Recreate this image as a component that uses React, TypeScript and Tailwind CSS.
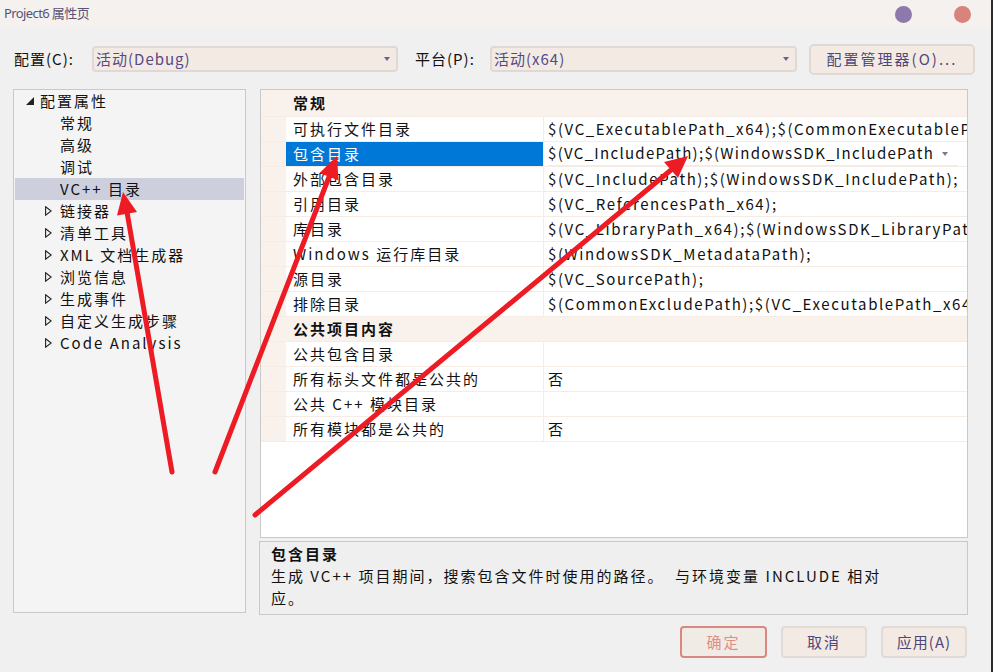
import React from 'react';

const FONT = "font-['Noto_Sans_CJK_SC','Noto_Sans',sans-serif]";

const TREE = [
  { label: '常规', kind: 'leaf' },
  { label: '高级', kind: 'leaf' },
  { label: '调试', kind: 'leaf' },
  { label: 'VC++ 目录', kind: 'leaf', active: true },
  { label: '链接器', kind: 'node' },
  { label: '清单工具', kind: 'node' },
  { label: 'XML 文档生成器', kind: 'node' },
  { label: '浏览信息', kind: 'node' },
  { label: '生成事件', kind: 'node' },
  { label: '自定义生成步骤', kind: 'node' },
  { label: 'Code Analysis', kind: 'node' },
];

const GENERAL = [
  ['可执行文件目录', '$(VC_ExecutablePath_x64);$(CommonExecutablePath)'],
  ['包含目录', '$(VC_IncludePath);$(WindowsSDK_IncludePath'],
  ['外部包含目录', '$(VC_IncludePath);$(WindowsSDK_IncludePath);'],
  ['引用目录', '$(VC_ReferencesPath_x64);'],
  ['库目录', '$(VC_LibraryPath_x64);$(WindowsSDK_LibraryPath_x64)'],
  ['Windows 运行库目录', '$(WindowsSDK_MetadataPath);'],
  ['源目录', '$(VC_SourcePath);'],
  ['排除目录', '$(CommonExcludePath);$(VC_ExecutablePath_x64)'],
];

const PUBLIC = [
  ['公共包含目录', ''],
  ['所有标头文件都是公共的', '否'],
  ['公共 C++ 模块目录', ''],
  ['所有模块都是公共的', '否'],
];

function Dropdown({ value, width }: { value: string; width: string }) {
  return (
    <div
      className={`${width} h-[26px] rounded-[4px] border-2 border-[#e0d8d4] bg-[#f3ebe3] flex items-center pl-[2px] pr-[6px]`}
    >
      <span className="flex-1 text-[15px] tracking-[1px] text-[#55498a] whitespace-nowrap">{value}</span>
      <svg width="6" height="4" viewBox="0 0 6 4">
        <path d="M0 0h6L3 4z" fill="#6b6485" />
      </svg>
    </div>
  );
}

function PropRow({ name, value, selected }: { name: string; value: string; selected?: boolean }) {
  return (
    <div className="flex h-[25px] border-b border-[#f6ece3]">
      <div className="w-[25px] shrink-0 bg-[#f9f2ec]" />
      <div
        className={`w-[258px] shrink-0 flex items-center pl-[7px] border-r border-[#f6ece3] whitespace-nowrap ${
          selected ? 'bg-[#0078d7] text-white' : 'bg-white text-[#111]'
        }`}
      >
        {name}
      </div>
      <div className="flex-1 min-w-0 bg-white flex items-center pl-[4px] overflow-hidden whitespace-nowrap text-[#111] tracking-[1.6px]">
        {selected ? (
          <div className="flex items-center h-[24px] pr-[10px] border-b border-[#f3ece6]">
            <span className="tracking-[1.3px]">{value}</span>
            <svg width="6" height="4" viewBox="0 0 6 4" className="ml-[8px]">
              <path d="M0 0h6L3 4z" fill="#7d7890" />
            </svg>
          </div>
        ) : (
          value
        )}
      </div>
    </div>
  );
}

function Category({ label, h }: { label: string; h: string }) {
  return (
    <div className={`${h} flex items-center bg-[#f9f2ec] pl-[32px] font-bold text-[#111] border-b border-[#f6ece3]`}>
      {label}
    </div>
  );
}

export default function App() {
  return (
    <div className={`${FONT} relative w-[993px] h-[672px] overflow-hidden bg-[#f0f0f0] text-[15px] tracking-[2px]`}>
      {/* title bar */}
      <div className="h-[28px] bg-[#f5f1ee] flex items-center pl-[4px] pr-[22px]">
        <span className="flex-1 text-[13px] tracking-[-0.6px] text-[#595275] font-['Noto_Sans','Noto_Sans_CJK_SC',sans-serif]">
          Project6 属性页
        </span>
        <div className="w-[17px] h-[17px] rounded-full bg-[#8e79ab]" />
        <div className="w-[17px] h-[17px] rounded-full bg-[#d8837b] ml-[42px]" />
      </div>

      {/* config row */}
      <div className="flex items-center h-[32px] mt-[15px] pl-[14px]">
        <span className="w-[78px] text-[#111] tracking-[1px]">配置(C):</span>
        <Dropdown value="活动(Debug)" width="w-[306px]" />
        <span className="ml-[17px] w-[75px] text-[#111] tracking-[1px]">平台(P):</span>
        <Dropdown value="活动(x64)" width="w-[307px]" />
        <button className="ml-[12px] w-[166px] h-[31px] rounded-[5px] border-2 border-[#e0d8d4] bg-[#f3ebe3] text-[#4f477a] tracking-[2px]">
          配置管理器(O)...
        </button>
      </div>

      {/* body */}
      <div className="flex mt-[14px] pl-[13px]">
        {/* tree */}
        <div className="w-[233px] h-[524px] border border-[#c9c9c9] bg-[#f4f4f4] pt-0 text-[#111]">
          <div className="h-[22px] flex items-center pl-[12px]">
            <svg width="8" height="8" viewBox="0 0 8 8" className="mr-[6px]">
              <path d="M8 0V8H0z" fill="#222" />
            </svg>
            <span>配置属性</span>
          </div>
          {TREE.map((t) => (
            <div
              key={t.label}
              className={`h-[22px] flex items-center ${t.active ? 'bg-[#cdd0dc] mx-[1px] pl-[30px]' : 'pl-[31px]'}`}
            >
              <span className="w-[15px] flex items-center">
                {t.kind === 'node' && (
                  <svg width="7" height="10" viewBox="0 0 7 10">
                    <path d="M0.6 0.8L6.2 5L0.6 9.2z" fill="none" stroke="#222" strokeWidth="1.1" />
                  </svg>
                )}
              </span>
              <span className="whitespace-nowrap">{t.label}</span>
            </div>
          ))}
        </div>

        {/* right column */}
        <div className="ml-[13px] w-[709px] flex flex-col">
          <div className="h-[449px] border border-[#c9c9c9] bg-white ml-[1px] w-[708px] overflow-hidden">
            <Category label="常规" h="h-[27px]" />
            {GENERAL.map(([n, v]) => (
              <PropRow key={n} name={n} value={v} selected={n === '包含目录'} />
            ))}
            <Category label="公共项目内容" h="h-[25px]" />
            {PUBLIC.map(([n, v]) => (
              <PropRow key={n} name={n} value={v} />
            ))}
          </div>

          <div className="mt-[3px] h-[74px] w-[709px] border border-[#c9c9c9] bg-[#efefef] pl-[11px] pt-[1px] text-[#111] leading-[22px]">
            <div className="font-bold">包含目录</div>
            <div>
              生成 VC++ 项目期间，搜索包含文件时使用的路径。&nbsp;&nbsp;与环境变量 INCLUDE 相对
              <br />
              应。
            </div>
          </div>

          <div className="flex justify-end gap-[14px] mt-[11px] pr-[1px]">
            <button className="w-[87px] h-[32px] rounded-[4px] border-2 border-[#d98880] bg-[#f1ebe6] text-[#e08d85]">
              确定
            </button>
            <button className="w-[86px] h-[32px] rounded-[4px] border-2 border-[#e2dad6] bg-[#f3ebe3] text-[#4f477a]">
              取消
            </button>
            <button className="w-[86px] h-[32px] rounded-[4px] border-2 border-[#e2dad6] bg-[#f3ebe3] text-[#4f477a] tracking-[1px]">
              应用(A)
            </button>
          </div>
        </div>
      </div>

      {/* right window edge */}
      <div className="absolute top-0 right-0 w-[2px] h-full bg-[#2b2b2b]" />

      {/* red annotation arrows */}
      <svg className="absolute inset-0 pointer-events-none" width="993" height="672" viewBox="0 0 993 672">
        <g stroke="#ed1c24" strokeWidth="5" strokeLinecap="round" fill="none">
          <line x1="172" y1="472" x2="127" y2="212" />
          <line x1="215" y1="472" x2="329" y2="177" />
          <line x1="255" y1="515" x2="671" y2="170" />
        </g>
        <g fill="#ed1c24">
          <path d="M123 192L137 212L117 215.5z" />
          <path d="M337 156L338.5 180.5L319.5 173z" />
          <path d="M688 156L678 178L664 162z" />
        </g>
      </svg>
    </div>
  );
}
